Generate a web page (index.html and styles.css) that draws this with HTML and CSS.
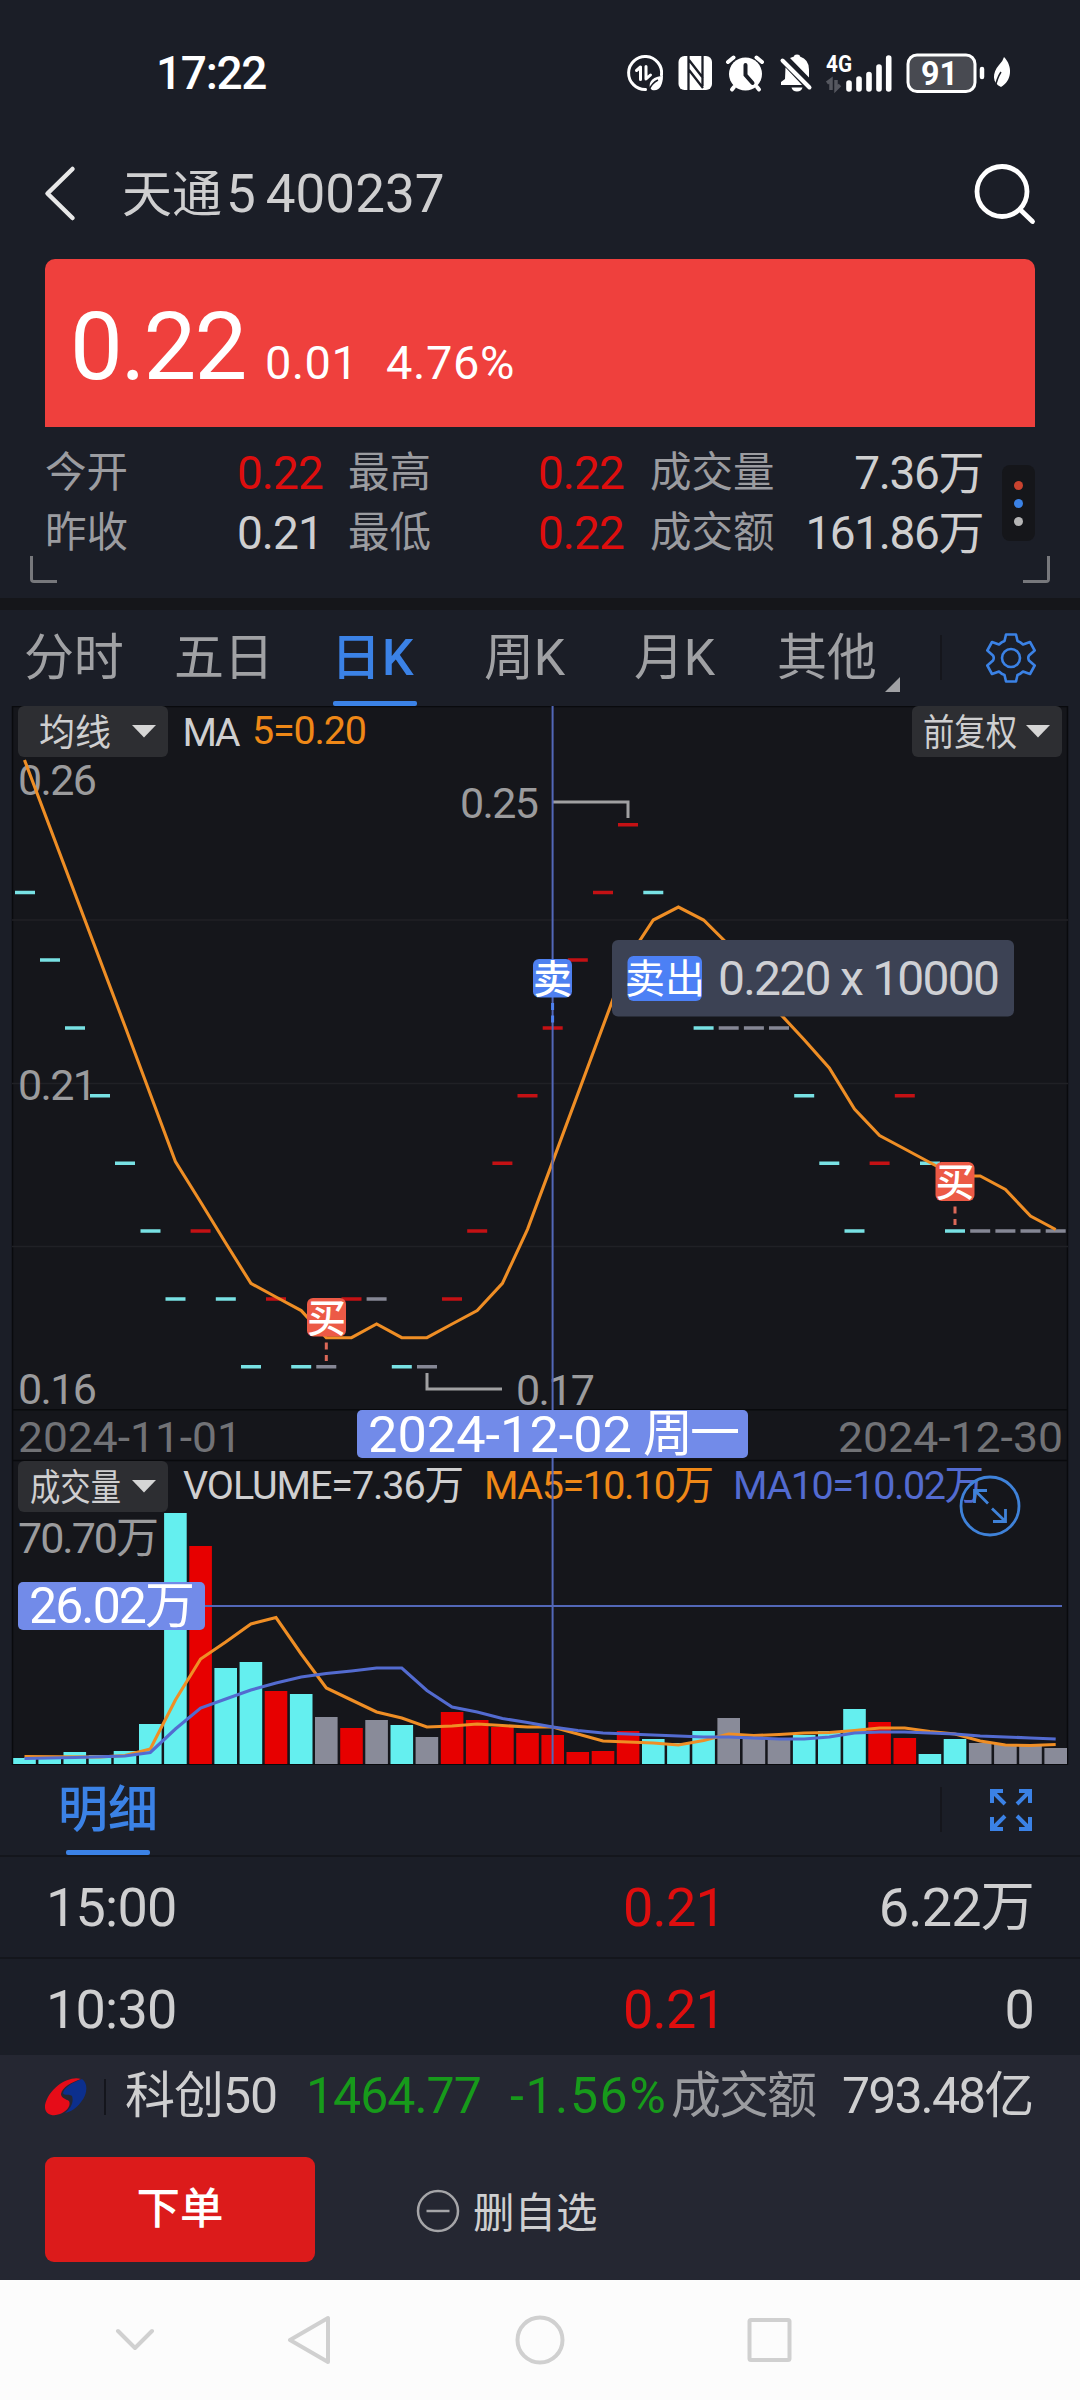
FILE: index.html
```html
<!DOCTYPE html>
<html lang="zh-CN">
<head>
<meta charset="utf-8">
<title>天通5 400237</title>
<link rel="stylesheet" href="styles.css">
</head>
<body>
<div class="phone">
  <header class="status">
    <span class="clock">17:22</span>
    <svg class="status-icons" width="420" height="70" viewBox="0 0 420 70">
      <g fill="none" stroke="#fff" stroke-linecap="round" stroke-linejoin="round">
        <path d="M30.500 49.500A16.500 16.500 0 1 1 46.500 35" stroke-width="3"/>
        <path d="M21.500 30.500l4-3.500v12.500M31 26.500v12.500l4.500-4" stroke-width="3"/>
        <path d="M113 22l5.500-4.500M147 22l-5.500-4.500" stroke-width="4"/>
        <path d="M119 47l-2 2.500M142 47l2 2.500" stroke-width="4"/>
        <path d="M167.500 20.500l27 27" stroke-width="4"/>
        <path d="M234 49v-6M244 49v-10M254 49v-14.500M264 49v-22M273.700 49v-31" stroke-width="5.600"/>
        <rect x="293" y="15" width="67" height="36.500" rx="9" fill="#484a51" stroke-width="3"/>
        <path d="M367 29v8" stroke-width="4.500"/>
      </g>
      <g fill="#fff">
        <path d="M35 48c-2-7 4-12 13-12 0 9-4 16-11 14z"/>
        <path d="M34 50c2-5 5-8 9-10" stroke="#1b1e27" stroke-width="1.500" fill="none"/>
        <rect x="63.500" y="16" width="33.500" height="34" rx="6"/>
        <path d="M73.500 16v34M74 20l14 18M74 30l14 18M87.500 16v30M73.500 22v28" fill="none" stroke="#1b1e27" stroke-width="2.300"/>
        <circle cx="130.500" cy="34" r="16.500"/>
        <path d="M130.500 25v10l7 8" fill="none" stroke="#1b1e27" stroke-width="4" stroke-linecap="round"/>
        <path d="M175 18q2-1 4-1.500 0-2 3-2t3 2q9 3 9 13v8zM170.500 27.500L187 45H166v-3l4-3z"/>
        <path d="M176.500 47.500h11q-1 4-5.500 4t-5.500-4z"/>
        <text class="net" x="211" y="32" textLength="26" lengthAdjust="spacingAndGlyphs">4G</text>
        <text class="level" x="306" y="45" textLength="37" lengthAdjust="spacingAndGlyphs">91</text>
        <path d="M389 17c9 9 8 24-3 30-9-4-9-14-2-22q4-4 5-8z"/>
        <path d="M380 48q2-10 6-16" stroke="#1b1e27" stroke-width="1.500" fill="none"/>
      </g>
      <path d="M212 43l4-3v10M221 40v9l4-4" fill="none" stroke="#55575f" stroke-width="3.500"/>
    </svg>
  </header>

  <nav class="titlebar">
    <svg class="back" width="32" height="58" viewBox="0 0 32 58"><path d="M28.500 4L3.500 28.500l25 24.500" fill="none" stroke="#e8e8e8" stroke-width="4.500" stroke-linecap="round" stroke-linejoin="round"/></svg>
    <h1><span class="cjk">天通</span><span class="five">5</span><span>400237</span></h1>
    <svg class="search" width="62" height="62" viewBox="0 0 62 62"><g fill="none" stroke="#fff" stroke-width="4.800" stroke-linecap="round"><circle cx="28" cy="28.500" r="25"/><path d="M46 46.500L58.500 58.500"/></g></svg>
  </nav>

  <section class="quote">
    <div class="price">
      <span class="last">0.22</span><span class="chg">0.01</span><span class="pct">4.76%</span>
    </div>
    <div class="stats">
      <dl>
        <dt>今开</dt><dd class="up">0.22</dd><dt>最高</dt><dd class="up">0.22</dd><dt>成交量</dt><dd>7.36万</dd>
        <dt>昨收</dt><dd>0.21</dd><dt>最低</dt><dd class="up">0.22</dd><dt>成交额</dt><dd>161.86万</dd>
      </dl>
      <div class="more"><i></i><i></i><i></i></div>
    </div>
    <span class="corner left"></span><span class="corner right"></span>
  </section>

  <nav class="tabs">
    <span>分时</span><span>五日</span><span class="active">日K</span><span>周K</span><span>月K</span><span class="other">其他</span>
    <div class="rule"></div>
    <svg class="gear" width="50" height="50" viewBox="-25 -25 50 50"><g fill="none" stroke="#3b82e6" stroke-width="2.600" stroke-linejoin="round"><circle r="9"/><path d="M-5-23.500H5L6.500-17Q9.500-16 12-13.500L19-16 23.700-7.500 18-2.500Q16.500 0 18 2.500L23.700 7.500 19 16 12 13.500Q9.500 16 6.500 17L5 23.500H-5L-6.500 17Q-9.500 16-12 13.500L-19 16-23.700 7.500-18 2.500Q-16.500 0-18-2.500L-23.700-7.500-19-16-12-13.500Q-9.500-16-6.500-17Z"/></g></svg>
  </nav>

  <svg class="chart" width="1080" height="1059" viewBox="0 706 1080 1059">
    <rect class="pane" x="12" y="706" width="1056" height="1058"/>
    <path class="frame" d="M12.500 706V1764.500H1067.500V706M12 706.500H1068M12 1409.700H1068M12 1460.500H1068"/>
    <path class="grid" d="M12 920H1068M12 1083.500H1068M12 1246.500H1068"/>

    <g class="axis">
      <text x="18" y="795" textLength="79">0.26</text>
      <text x="18" y="1100" textLength="79">0.21</text>
      <text x="18" y="1404" textLength="79">0.16</text>
      <text x="460" y="818" textLength="79">0.25</text>
      <text x="516" y="1405" textLength="79">0.17</text>
      <text x="18" y="1553" textLength="141">70.70万</text>
      <text class="date" x="18" y="1452" textLength="224" lengthAdjust="spacingAndGlyphs">2024-11-01</text>
      <text class="date" x="838" y="1452" textLength="225" lengthAdjust="spacingAndGlyphs">2024-12-30</text>
    </g>
    <path class="pointer" d="M553 802H628V818M427 1373V1389H502"/>

    <path class="tick down" d="M15 892.500h20M40 960h20M65 1028h20M90 1095.700h20M115 1163.300h20M140.500 1231h20M165.500 1299h20M215.800 1299h20M241 1366.700h20M291.200 1366.700h20M391.800 1366.700h20M643.300 892.500h20M693.600 1028h20M794.200 1095.700h20M819.300 1163.300h20M844.500 1231h20M920 1163.300h20M945 1231h20"/>
    <path class="tick up" d="M190.600 1231h20M266 1299h20M341.500 1299h20M442 1299h20M467.200 1231h20M492.400 1163.300h20M517.500 1095.700h20M542.700 1028h20M567.800 960h20M593 892.500h20M618 824.700h20M869.600 1163.300h20M894.800 1095.700h20"/>
    <path class="tick flat" d="M316.300 1366.700h20M366.600 1299h20M417 1366.700h20M718.700 1028h20M743.900 1028h20M769 1028h20M970.200 1231h20M995.400 1231h20M1020.500 1231h20M1045.700 1231h20"/>
    <polyline class="ma5" points="24.500,760 125,1026.300 175.400,1161.600 200.600,1202 225.700,1243 250.900,1283.400 276,1297 301.200,1310.600 326.300,1337.700 351.500,1337.700 376.600,1324 401.800,1337.700 426.900,1337.700 452.100,1324 477.200,1310.600 502.400,1283.400 527.500,1229.300 552.700,1161.600 628.100,958.500 653.300,920 678.400,907 703.600,920 728.700,945 753.900,985.600 779,1012.600 804.200,1039.700 829.300,1068 854.500,1109 879.600,1135.500 904.800,1149 929.900,1162.500 955,1176 980.200,1176 1005.400,1189.500 1030.500,1216 1055.700,1229.500"/>

    <path class="bar down" d="M24.500 1764V1758M49.700 1764V1759M74.800 1764V1752M100 1764V1755M125 1764V1751M150.300 1764V1724M175.400 1764V1513M225.700 1764V1668M250.900 1764V1662M301.200 1764V1694M401.800 1764V1725M653.300 1764V1739M678.400 1764V1743M703.600 1764V1731M804.200 1764V1735M829.300 1764V1731M854.500 1764V1709M929.900 1764V1754M955 1764V1739"/>
    <path class="bar up" d="M200.600 1764V1546M276 1764V1691M351.500 1764V1728M452.100 1764V1712M477.200 1764V1720M502.400 1764V1727M527.500 1764V1733M552.700 1764V1735M577.800 1764V1752M603 1764V1751M628.100 1764V1731M879.600 1764V1722M904.800 1764V1738"/>
    <path class="bar flat" d="M326.300 1764V1717M376.600 1764V1720M426.900 1764V1737M728.700 1764V1718M753.900 1764V1739M779 1764V1739M980.200 1764V1743M1005.400 1764V1744M1030.500 1764V1745M1055.700 1764V1748"/>
    <polyline class="ma5" points="24.500,1756.500 100,1757 125,1755.500 150.300,1749 175.400,1700 200.600,1659 225.700,1642 250.900,1624 276,1617.500 301.200,1654 326.300,1688 351.500,1700 376.600,1712 401.800,1718 426.900,1727 452.100,1726 477.200,1724 502.400,1725.500 527.500,1727 552.700,1727 577.800,1734 603,1741 628.100,1742 653.300,1743 678.400,1745 703.600,1740.500 728.700,1734 753.900,1735.500 779,1734.500 804.200,1733 829.300,1732.500 854.500,1730.500 879.600,1728 904.800,1728 929.900,1731.500 955,1734 980.200,1741 1005.400,1745 1030.500,1745.500 1055.700,1744.500"/>
    <polyline class="ma10" points="24.500,1758.500 74.800,1757.500 125,1756 150.300,1752.500 175.400,1729 200.600,1708 225.700,1699 250.900,1690 276,1683 301.200,1677 326.300,1673.500 351.500,1671 376.600,1668 401.800,1668 426.900,1690.500 452.100,1707 477.200,1712 502.400,1718.500 527.500,1722.500 552.700,1727 577.800,1730.500 603,1733 628.100,1734 678.400,1736 703.600,1737 728.700,1737 753.900,1738 779,1739 804.200,1739 829.300,1737 854.500,1733 879.600,1732 904.800,1732 955,1734 980.200,1736 1005.400,1737 1030.500,1738 1055.700,1739"/>

    <g class="legend">
      <text x="182.500" y="746" textLength="58" class="plain">MA</text>
      <text x="252" y="744" textLength="115" class="orange">5=0.20</text>
      <text x="183" y="1499" textLength="281" class="plain">VOLUME=7.36万</text>
      <text x="484" y="1499" textLength="230" class="orange">MA5=10.10万</text>
      <text x="733" y="1499" textLength="251" class="blue">MA10=10.02万</text>
    </g>

    <path class="cross" d="M552.600 706V1764"/>
    <path class="cross" d="M205 1606H1062"/>

    <g class="picker">
      <rect x="18" y="706" width="150" height="51" rx="6"/>
      <text x="39" y="746" textLength="72" lengthAdjust="spacingAndGlyphs">均线</text>
      <path d="M132 725h24l-12 12.500z"/>
      <rect x="912" y="706" width="150" height="51" rx="6"/>
      <text x="923" y="746" textLength="94" lengthAdjust="spacingAndGlyphs">前复权</text>
      <path d="M1026 725h24l-12 12.500z"/>
      <rect x="18" y="1461" width="150" height="51" rx="6"/>
      <text x="30" y="1500.500" textLength="91" lengthAdjust="spacingAndGlyphs">成交量</text>
      <path d="M132 1480h24l-12 12.500z"/>
    </g>

    <g class="tag">
      <rect x="357" y="1410" width="391" height="48" rx="5"/>
      <text x="368" y="1452" textLength="264" lengthAdjust="spacingAndGlyphs">2024-12-02</text>
      <text x="643" y="1451" textLength="97">周一</text>
      <rect x="18" y="1582" width="187" height="48" rx="5"/>
      <text x="29" y="1623" textLength="166">26.02万</text>
    </g>

    <g class="marker sell">
      <path d="M552.600 1003v7m0 5.500v7"/>
      <rect x="533" y="959" width="39" height="38.500" rx="6"/>
      <text x="533" y="993" textLength="39">卖</text>
    </g>
    <g class="marker buy">
      <path d="M326.300 1342.500v7m0 5.500v6"/>
      <rect x="307" y="1298" width="39" height="38.500" rx="6"/>
      <text x="307" y="1332" textLength="39">买</text>
      <path d="M955 1206.500v7m0 5.500v6"/>
      <rect x="935.500" y="1162" width="39" height="39" rx="6"/>
      <text x="935.500" y="1196" textLength="39">买</text>
    </g>

    <g class="tip">
      <rect class="box" x="612" y="940" width="402" height="76.500" rx="6"/>
      <rect class="chip" x="627.500" y="956" width="74.500" height="45" rx="6"/>
      <text class="side" x="625" y="993" textLength="80">卖出</text>
      <text class="deal" x="718" y="995" textLength="282">0.220 x 10000</text>
    </g>

    <g class="zoom">
      <circle cx="990" cy="1506" r="29"/>
      <path d="M988 1503.500L975.500 1491M974.500 1503V1490.500H987M992 1508.500L1005 1521M1005.500 1509V1521.500H993"/>
    </g>
  </svg>

  <section class="detail">
    <div class="detail-head">
      <span class="detail-tab">明细</span>
      <div class="rule"></div>
      <svg class="expand" width="44" height="44" viewBox="0 0 44 44"><path d="M16 16L3 3M3 15V3H14M28 16L41 3M41 15V3H30M16 28L3 41M3 29V41H14M28 28L41 41M41 29V41H30" fill="none" stroke="#3b82e6" stroke-width="4"/></svg>
    </div>
    <div class="trade"><span>15:00</span><span class="up">0.21</span><span class="qty">6.22万</span></div>
    <div class="trade"><span>10:30</span><span class="up">0.21</span><span class="qty">0</span></div>
  </section>

  <footer class="bottom">
    <div class="index">
      <svg class="logo" width="42" height="40" viewBox="0 0 42 40"><path d="M36 2C25-2 4 10 0 28c-1 9 7 12 15 9 8-3 11-9 9-13-3-2-8-3-8-7 1-7 11-12 20-15z" fill="#e60c18"/><path d="M37 2c6 4 6 15-1 23-5 7-11 10-16 11 6-5 9-11 7-17-2-2-8 0-9-3 1-5 8-10 19-14z" fill="#0c2f8d"/></svg>
      <i class="bar-rule"></i>
      <span class="name">科创50</span><span class="pts">1464.77</span><span class="rate">-1.56%</span><span class="label">成交额</span><span class="amount">793.48亿</span>
    </div>
    <div class="actions">
      <div class="order">下单</div>
      <svg class="minus" width="44" height="44" viewBox="0 0 44 44"><g fill="none" stroke="#a5a5a8" stroke-width="2.500"><circle cx="22" cy="22" r="20"/><path d="M10.500 22h23"/></g></svg>
      <span class="remove">删自选</span>
    </div>
  </footer>

  <nav class="system">
    <svg width="1080" height="120" viewBox="0 0 1080 120"><g fill="none" stroke="#d0d0d0" stroke-width="4" stroke-linecap="round" stroke-linejoin="round"><path d="M118 51l17 17 17-17M328 38v44L290 60z"/><circle cx="540" cy="60" r="22.500"/><rect x="749.500" y="40" width="40" height="40" rx="1.500"/></g></svg>
  </nav>
</div>
</body>
</html>
```
FILE: styles.css
```css
* { box-sizing: border-box; margin: 0; padding: 0; }
body {
  width: 1080px;
  background: #1b1e27;
  color: #cfcfd0;
  font-family: Roboto, "Noto Sans CJK SC", sans-serif;
  font-weight: 400;
  white-space: nowrap;
}
svg { display: block; flex: none; }
.phone { width: 1080px; height: 2400px; overflow: hidden; display: flex; flex-direction: column; }
.phone > * { flex: none; }

.status { height: 146px; display: flex; align-items: center; padding: 0 45px 0 156px; color: #fff; }
.clock { flex: 1; font-size: 46px; font-weight: 500; letter-spacing: -1.3px; }
.status-icons { margin-top: 4px; }
.net { font-size: 24px; font-weight: 700; }
.level { font-size: 33px; font-weight: 700; }

.titlebar { height: 96px; display: flex; align-items: center; padding: 0 44px 0 44px; }
.titlebar h1 { flex: 1; margin-left: 46px; display: flex; align-items: baseline; font-size: 53px; font-weight: 400; line-height: 60px; }
.titlebar .cjk { font-size: 50px; }
.titlebar .five { margin: 0 10px 0 4px; }

.quote { position: relative; height: 339px; margin-top: 17px; padding: 0 45px; }
.price {
  height: 168px; padding: 41px 0 0 25px; display: flex; align-items: baseline;
  background: #ef403d; color: #fff; border-radius: 10px 10px 0 0; font-size: 47px; line-height: 94px;
}
.price .last { width: 195px; font-size: 94px; letter-spacing: -2px; }
.price .chg { width: 121px; letter-spacing: .4px; }
.price .pct { letter-spacing: .6px; }
.stats { display: flex; justify-content: space-between; align-items: center; padding-top: 16px; }
.stats dl { display: grid; width: 938px; grid-template-columns: 83px 195px 25px 83px 193px 26px 124px 1fr; grid-auto-rows: 60px; line-height: 60px; }
.stats dt { font-size: 41.5px; color: #9b9ca0; }
.stats dt:nth-of-type(3n+1) { grid-column: 1; }
.stats dt:nth-of-type(3n+2) { grid-column: 4; }
.stats dt:nth-of-type(3n) { grid-column: 7; }
.stats dd { font-size: 46px; letter-spacing: -.9px; text-align: right; }
.stats dd:nth-of-type(3n) { letter-spacing: -1.4px; }
.up { color: #de0e0e; }
.more {
  width: 33px; height: 76px; border-radius: 8px; background: #15161a;
  display: flex; flex-direction: column; align-items: center; justify-content: center; gap: 9px;
}
.more i { width: 9px; height: 9px; border-radius: 50%; background: #b5b5b5; }
.more i:nth-child(1) { background: #c9432f; }
.more i:nth-child(2) { background: #3b82e6; }
.corner { position: absolute; top: 297px; width: 27px; height: 27px; border-bottom: 3px solid #77787c; }
.corner.left { left: 30px; border-left: 3px solid #77787c; border-radius: 0 0 0 4px; }
.corner.right { right: 30px; border-right: 3px solid #77787c; border-radius: 0 0 4px 0; }

.tabs {
  height: 108px; border-top: 12px solid #15161a; display: flex; align-items: flex-start; padding-left: 24px;
  font-size: 50px; line-height: 96px; color: #a0a1a4;
}
.tabs span { width: 150px; height: 96px; letter-spacing: -.3px; }
.tabs span:nth-child(2) { width: 157px; }
.tabs .active { position: relative; width: 153px; color: #3b82e6; font-weight: 500; letter-spacing: 1px; }
.tabs .active::after { content: ""; position: absolute; left: 2px; bottom: 0; width: 84px; height: 5px; border-radius: 2px; background: #3b82e6; }
.tabs span:nth-child(5) { width: 143px; }
.tabs .other { position: relative; width: 163px; }
.tabs .other::after { content: ""; position: absolute; left: 108px; top: 67px; border-left: 15px solid transparent; border-bottom: 15px solid #a0a1a4; }
.rule { width: 2px; height: 45px; margin-top: 25px; background: #15161c; }
.gear { margin: 23px 0 0 44px; }

.chart { font-size: 43px; }
.pane { fill: #15161b; }
.frame, .grid, .pointer, .tick, .bar, .ma5, .ma10, .cross, .zoom { fill: none; }
.frame { stroke: #090a0d; stroke-width: 1.5; }
.grid { stroke: #202126; stroke-width: 1.5; }
.axis { fill: #9b9b9d; }
.axis .date { fill: #717276; }
.pointer { stroke: #a0a0a2; stroke-width: 3; }
.tick { stroke-width: 3.5; }
.tick.down { stroke: #78e1e4; }
.tick.up { stroke: #c41114; }
.tick.flat { stroke: #858795; }
.ma5 { stroke: #ef8e25; stroke-width: 3.1; }
.ma10 { stroke: #536bd0; stroke-width: 3.1; }
.bar { stroke-width: 22.6; }
.bar.down { stroke: #64efef; }
.bar.up { stroke: #e70000; }
.bar.flat { stroke: #898b99; }
.legend { font-size: 39.5px; }
.plain { fill: #cfcfd0; }
.orange { fill: #ef8817; }
.blue { fill: #536bd0; }
.cross { stroke: #5267b8; stroke-width: 2; }
.picker rect { fill: #2d2e32; }
.picker text { font-size: 37px; fill: #cfcfd0; }
.picker path { fill: #d5d5d5; }
.tag rect { fill: #728be9; }
.tag text { font-size: 50px; fill: #fff; }
.marker text { font-size: 39px; font-weight: 500; fill: #fff; }
.marker path { stroke-width: 3; }
.sell rect { fill: #4e80f0; }
.sell path { stroke: #4e80f0; }
.buy rect { fill: #ec5a46; }
.buy path { stroke: #dc6858; }
.tip .box { fill: #3c4254; }
.tip .chip { fill: #4c80f5; }
.tip .side { font-size: 40px; fill: #fff; }
.tip .deal { font-size: 48px; fill: #cfd0d4; }
.zoom { stroke: #3f82d9; stroke-width: 2.8; }

.detail { height: 290px; }
.detail-head { height: 92px; display: flex; border-bottom: 2px solid #14161c; padding-left: 58px; }
.detail-tab { position: relative; width: 882px; font-size: 50px; font-weight: 500; line-height: 90px; color: #3b82e6; }
.detail-tab::after { content: ""; position: absolute; left: 8px; bottom: 0; width: 84px; height: 5px; border-radius: 2px; background: #3b82e6; }
.detail-head .rule { margin-top: 22px; }
.expand { margin: 23px 0 0 47px; }
.trade { height: 102px; display: flex; padding: 0 46px; border-bottom: 2px solid #14161c; font-size: 54px; line-height: 102px; letter-spacing: -.8px; }
.trade:last-child { border-bottom: 0; height: 96px; }
.trade span:first-child { width: 577px; }
.trade .qty { margin-left: auto; }

.bottom { height: 225px; background: #252732; }
.index { height: 83px; display: flex; align-items: center; padding-left: 45px; font-size: 50px; line-height: 83px; }
.index span { letter-spacing: -1px; }
.bar-rule { width: 2px; height: 36px; margin: 0 19px 0 17px; background: #14151c; }
.index .name { width: 181px; }
.pts, .rate { color: #179a1b; }
.index .pts { width: 204px; }
.index .rate { width: 161px; letter-spacing: 1.6px; }
.index .label { color: #9b9ca0; width: 171px; letter-spacing: -2px; }
.index .amount { letter-spacing: -1.9px; }
.actions { display: flex; align-items: center; padding: 19px 0 0 45px; }
.order { width: 270px; height: 105px; border-radius: 9px; background: #dc1b1b; color: #fff; font-size: 43.5px; font-weight: 500; line-height: 105px; text-align: center; }
.minus { margin: 3px 13px 0 101px; }
.remove { font-size: 41.5px; }

.system { height: 120px; background: #fcfcfc; }
```
